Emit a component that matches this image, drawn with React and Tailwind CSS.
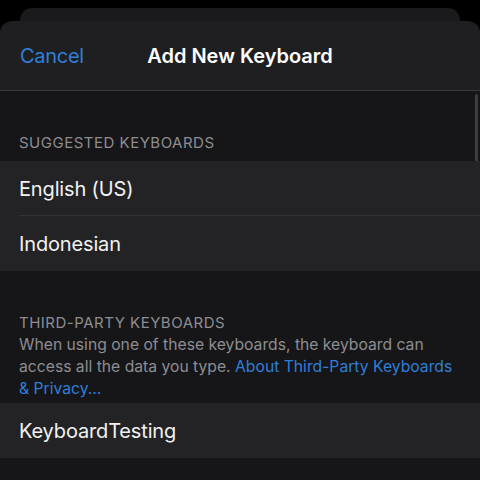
import React from "react";

const font = { fontFamily: "Inter, 'Liberation Sans', sans-serif" };

const Row = ({ label, divider }) => (
  <div className="relative h-[55px] flex items-center pl-[19px] bg-[#232325]">
    <span className="text-[20px] text-[#f2f2f2] tracking-[-0.15px]">{label}</span>
    {divider && (
      <div className="absolute bottom-0 left-[19px] right-0 h-px bg-[#333336]" />
    )}
  </div>
);

const SectionHeader = ({ children }) => (
  <div className="px-[19px] text-[15px] leading-[20px] text-[#8d8d92] tracking-[0.5px]">
    {children}
  </div>
);

export default function App() {
  return (
    <div className="w-[480px] h-[480px] bg-black overflow-hidden flex flex-col" style={font}>
      <div className="mx-[20px] mt-[8px] h-[13px] rounded-t-[12px] bg-[#1a1a1c]" />
      <div className="flex-1 flex flex-col rounded-t-[12px] bg-[#1f1f21] overflow-hidden">
        <div className="relative h-[70px] flex items-center border-b border-[#39393c]">
          <span className="pl-[20px] text-[20px] text-[#2f7fd8] tracking-[-0.3px]">Cancel</span>
          <span className="absolute left-0 right-0 text-center text-[20px] font-semibold text-white">
            Add New Keyboard
          </span>
        </div>
        <div className="relative flex-1 bg-[#161618]">
          <div className="absolute right-[2px] top-[3px] w-[3px] h-[118px] rounded-full bg-[#3d3d40]" />
          <div className="pt-[42px] pb-[8px]">
            <SectionHeader>SUGGESTED KEYBOARDS</SectionHeader>
          </div>
          <Row label="English (US)" divider />
          <Row label="Indonesian" />
          <div className="pt-[42px] pb-[3px]">
            <SectionHeader>THIRD-PARTY KEYBOARDS</SectionHeader>
            <p className="pl-[19px] pr-[14px] mt-[1px] text-[15.7px] leading-[22px] text-[#8d8d92]">
              When using one of these keyboards, the keyboard can access all the data you type.{" "}
              <span className="text-[#2f7fd8]">About Third-Party Keyboards &amp; Privacy...</span>
            </p>
          </div>
          <Row label="KeyboardTesting" />
        </div>
      </div>
    </div>
  );
}
